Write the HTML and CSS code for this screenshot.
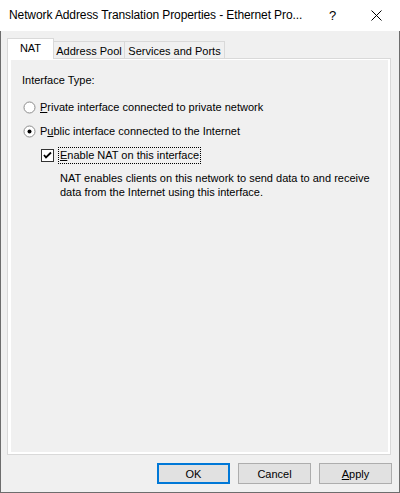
FILE: index.html
```html
<!DOCTYPE html>
<html>
<head>
<meta charset="utf-8">
<link rel="stylesheet" href="styles.css">
</head>
<body>
<div class="window">
  <div class="titlebar">
    <span class="title">Network Address Translation Properties - Ethernet Pro...</span>
    <span class="help">?</span>
    <span class="close"><svg width="11" height="11" viewBox="0 0 11 11"><path d="M0.5 0.5 L10.5 10.5 M10.5 0.5 L0.5 10.5" stroke="#000" stroke-width="1" fill="none"/></svg></span>
  </div>
  <div class="client">
    <div class="tabs">
      <div class="tab active tab-nat">NAT</div>
      <div class="tab tab-pool">Address Pool</div>
      <div class="tab tab-svc">Services and Ports</div>
    </div>
    <div class="panel">
      <div class="page">
        <div class="group-label">Interface Type:</div>
        <div class="radio-row row-private">
          <svg class="radio" width="13" height="13" viewBox="0 0 13 13"><circle cx="6.5" cy="6.5" r="5.5" fill="#fff" stroke="#8c8c8c"/></svg>
          <span><u>P</u>rivate interface connected to private network</span>
        </div>
        <div class="radio-row row-public">
          <svg class="radio" width="13" height="13" viewBox="0 0 13 13"><circle cx="6.5" cy="6.5" r="5.5" fill="#fff" stroke="#8c8c8c"/><circle cx="6.5" cy="6.5" r="2" fill="#000"/></svg>
          <span>P<u>u</u>blic interface connected to the Internet</span>
        </div>
        <div class="check-row">
          <span class="checkbox"><svg width="11" height="11" viewBox="0 0 11 11"><path d="M2 5 L4 7.5 L9 2.5" stroke="#000" stroke-width="1.8" fill="none"/></svg></span>
          <span class="focus"><u>E</u>nable NAT on this interface</span>
        </div>
        <p class="desc">NAT enables clients on this network to send data to and receive data from the Internet using this interface.</p>
      </div>
    </div>
    <div class="buttons">
      <button class="btn default">OK</button>
      <button class="btn">Cancel</button>
      <button class="btn"><u>A</u>pply</button>
    </div>
  </div>
</div>
</body>
</html>
```

FILE: styles.css
```css
html, body {
  margin: 0;
  padding: 0;
  background: #f0f0f0;
}
.window {
  width: 400px;
  height: 493px;
  font-family: "Liberation Sans", Arial, sans-serif;
  font-size: 11px;
  color: #000;
}
.titlebar {
  height: 31px;
  background: #fff;
  display: flex;
  align-items: center;
  padding-left: 9px;
  box-sizing: border-box;
}
.title {
  font-size: 12px;
  letter-spacing: -0.1px;
  flex: 1;
  white-space: nowrap;
  padding-bottom: 1px;
}
.help {
  font-size: 13px;
  width: 12px;
  margin-right: 30px;
  padding-bottom: 1px;
}
.close {
  width: 11px;
  height: 11px;
  margin-right: 18px;
  display: flex;
}
.client {
  height: 462px;
  box-sizing: border-box;
  border: 1px solid #6d6d6d;
  border-top: none;
  padding: 7px 0 0 6px;
  background: #f0f0f0;
}
.tabs {
  display: flex;
  align-items: flex-end;
  height: 20px;
}
.tab {
  box-sizing: border-box;
  height: 17px;
  border: 1px solid #d9d9d9;
  border-bottom: none;
  background: #f0f0f0;
  display: flex;
  align-items: center;
  justify-content: center;
  margin-left: -1px;
  padding-top: 1px;
  white-space: nowrap;
}
.tab.active {
  height: 21px;
  background: #fff;
  margin-left: 0;
  margin-bottom: -1px;
  position: relative;
  z-index: 1;
  padding-top: 0;
  padding-bottom: 2px;
}
.tab-nat { width: 47px; }
.tab-pool { width: 72px; }
.tab-svc { width: 101px; }
.panel {
  width: 384px;
  height: 397px;
  box-sizing: border-box;
  border: 1px solid #d9d9d9;
  background: #fff;
  padding: 1px 2px 2px 3px;
}
.page {
  height: 100%;
  background: #f0f0f0;
  box-sizing: border-box;
  padding: 14px 0 0 11px;
  line-height: 13px;
}
.group-label {
  height: 13px;
}
.radio-row {
  display: flex;
  align-items: center;
  height: 13px;
  margin-left: 1px;
}
.row-private { margin-top: 14px; }
.row-public { margin-top: 11px; }
.radio {
  display: block;
  margin-right: 4px;
}
.check-row {
  display: flex;
  align-items: center;
  margin-top: 9px;
  margin-left: 19px;
  height: 17px;
}
.checkbox {
  box-sizing: border-box;
  width: 13px;
  height: 13px;
  border: 1px solid #333;
  background: #fff;
  display: flex;
  align-items: center;
  justify-content: center;
  margin-right: 4px;
}
.focus {
  border: 1px dotted #000;
  padding: 1px 1px 1px 1px;
  line-height: 13px;
}
.desc {
  margin: 7px 0 0 38px;
  width: 320px;
  line-height: 14px;
}
.buttons {
  display: flex;
  justify-content: flex-end;
  gap: 8px;
  margin-top: 8px;
  padding-right: 7px;
}
.btn {
  width: 73px;
  height: 21px;
  box-sizing: border-box;
  border: 1px solid #adadad;
  background: #e1e1e1;
  font-family: "Liberation Sans", Arial, sans-serif;
  font-size: 11px;
  color: #000;
  padding: 0;
  margin: 0;
}
.btn.default {
  border: 2px solid #0078d7;
}
```
